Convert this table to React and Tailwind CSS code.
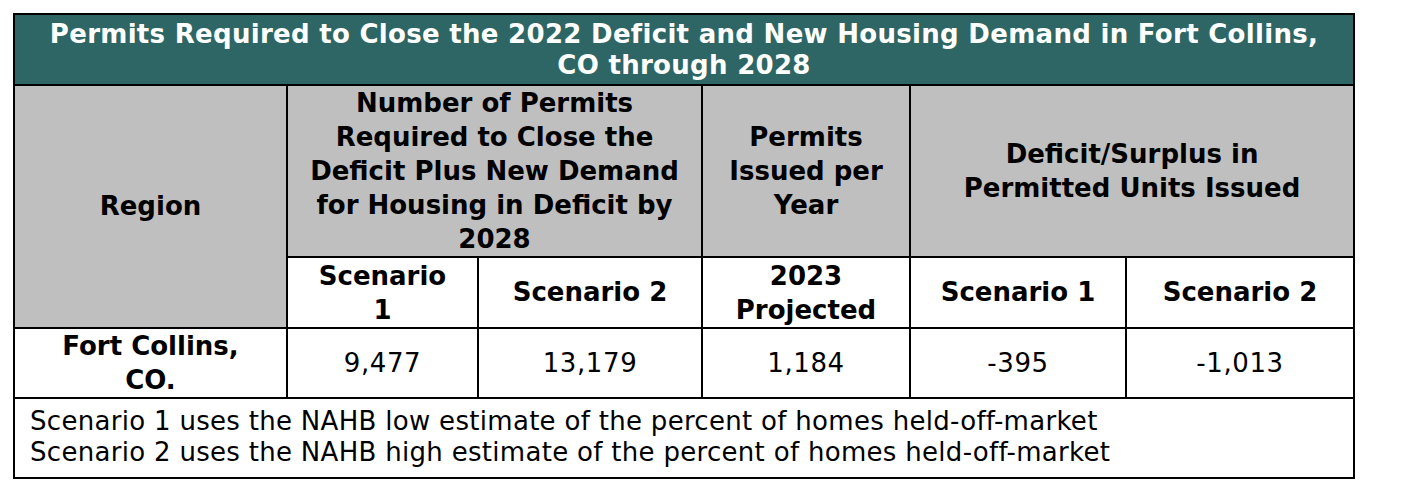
import React from 'react';

const font = { fontFamily: '"DejaVu Sans", Verdana, sans-serif' };

export default function App() {
  return (
    <div className="bg-white w-[1402px] h-[500px] pt-[13px] pl-[13px]" style={font}>
      <table className="table-fixed border-collapse border-2 border-black w-[1342px] text-[26px] text-black">
        <colgroup>
          <col className="w-[273px]" />
          <col className="w-[191px]" />
          <col className="w-[224px]" />
          <col className="w-[208px]" />
          <col className="w-[216px]" />
          <col className="w-[228px]" />
        </colgroup>
        <tbody>
          {/* Title */}
          <tr className="h-[71px]">
            <td colSpan={6} className="bg-[#2d6664] text-white font-bold text-center leading-[31px] tracking-[0.3px] border-2 border-black px-1 whitespace-nowrap">
              Permits Required to Close the 2022 Deficit and New Housing Demand in Fort Collins,
              <br />
              CO through 2028
            </td>
          </tr>

          {/* Header */}
          <tr className="h-[171px]">
            <td rowSpan={2} className="bg-[#bfbfbf] font-bold text-center border-2 border-black">
              Region
            </td>
            <td colSpan={2} className="bg-[#bfbfbf] font-bold text-center leading-[34px] border-2 border-black whitespace-nowrap">
              Number of Permits
              <br />
              Required to Close the
              <br />
              Deficit Plus New Demand
              <br />
              for Housing in Deficit by
              <br />
              2028
            </td>
            <td className="bg-[#bfbfbf] font-bold text-center leading-[34px] border-2 border-black whitespace-nowrap">
              Permits
              <br />
              Issued per
              <br />
              Year
            </td>
            <td colSpan={2} className="bg-[#bfbfbf] font-bold text-center leading-[34px] border-2 border-black whitespace-nowrap">
              Deficit/Surplus in
              <br />
              Permitted Units Issued
            </td>
          </tr>
          <tr className="h-[71px]">
            <td className="font-bold text-center leading-[34px] border-2 border-black">
              Scenario
              <br />1
            </td>
            <td className="font-bold text-center border-2 border-black whitespace-nowrap">Scenario 2</td>
            <td className="font-bold text-center leading-[34px] border-2 border-black">
              2023
              <br />
              Projected
            </td>
            <td className="font-bold text-center border-2 border-black whitespace-nowrap">Scenario 1</td>
            <td className="font-bold text-center border-2 border-black whitespace-nowrap">Scenario 2</td>
          </tr>

          {/* Data */}
          <tr className="h-[70px]">
            <td className="font-bold text-center leading-[34px] border-2 border-black whitespace-nowrap">
              Fort Collins,
              <br />
              CO.
            </td>
            <td className="text-center tracking-[0.6px] border-2 border-black">9,477</td>
            <td className="text-center tracking-[0.6px] border-2 border-black">13,179</td>
            <td className="text-center tracking-[0.6px] border-2 border-black">1,184</td>
            <td className="text-center tracking-[0.6px] border-2 border-black">-395</td>
            <td className="text-center tracking-[0.6px] border-2 border-black">-1,013</td>
          </tr>

          {/* Notes */}
          <tr className="h-[80px]">
            <td colSpan={6} className="border-2 border-black pl-[15px] pb-[3px] leading-[31px] tracking-[0.3px] whitespace-nowrap">
              Scenario 1 uses the NAHB low estimate of the percent of homes held-off-market
              <br />
              Scenario 2 uses the NAHB high estimate of the percent of homes held-off-market
            </td>
          </tr>
        </tbody>
      </table>
    </div>
  );
}
